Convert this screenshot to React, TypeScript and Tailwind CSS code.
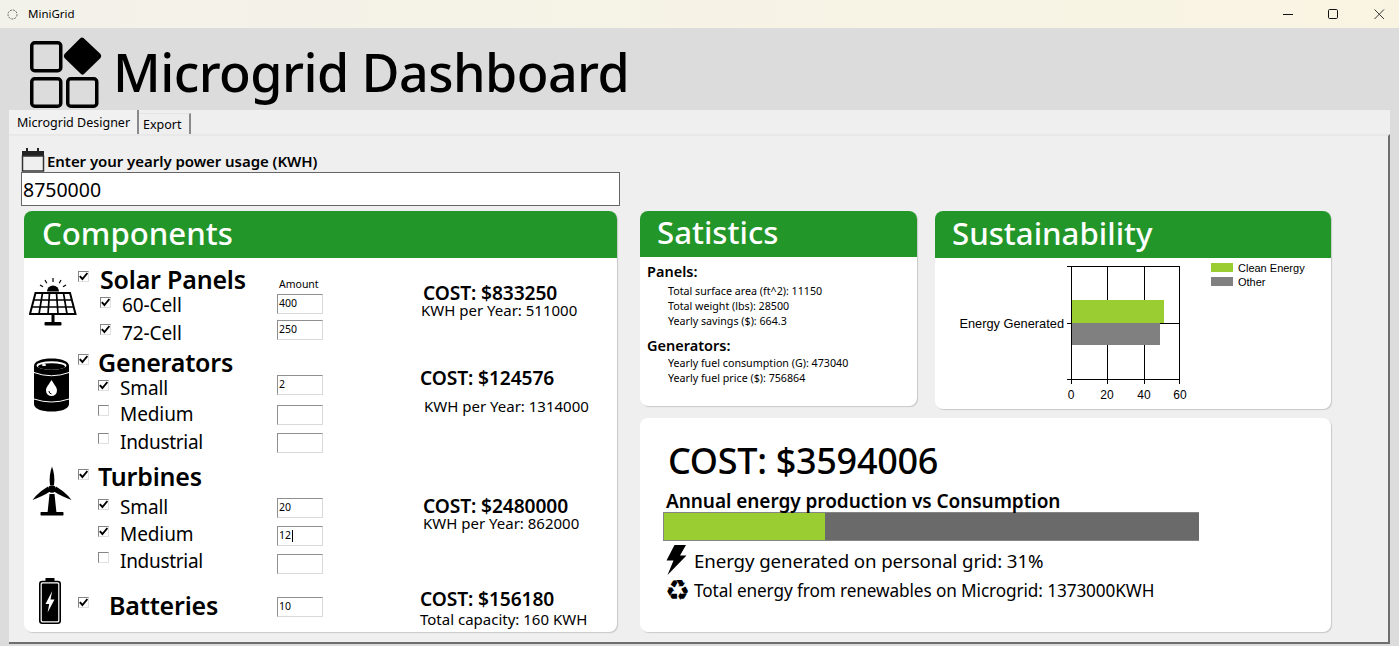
import * as React from 'react';

function Logo() {
  return (
    <svg width="72" height="71" viewBox="0 0 72 71" className="shrink-0">
      <g fill="none" stroke="#000" strokeWidth="3.5">
        <rect x="1.75" y="5.75" width="29" height="28" rx="3" />
        <rect x="1.75" y="41.75" width="29" height="27.5" rx="3" />
        <rect x="37.75" y="41.75" width="29" height="27.5" rx="3" />
      </g>
      <path d="M52 0.5 Q53 0.5 54 1.5 L70.5 17 Q72 19 70.5 21 L54 37 Q52.5 38.5 51 37 L34.5 21 Q33 19 34.5 17 L50 1.5 Q51 0.5 52 0.5 Z" fill="#000" />
    </svg>
  );
}

function WindowControls() {
  return (
    <div className="flex items-center text-black">
      <svg width="12" height="12" viewBox="0 0 12 12" className="mr-[33px]"><path d="M1 6.5H11" stroke="#111" strokeWidth="1" /></svg>
      <svg width="12" height="12" viewBox="0 0 12 12" className="mr-[34px]"><rect x="1.5" y="1.5" width="9" height="9" rx="1.2" fill="none" stroke="#111" strokeWidth="1" /></svg>
      <svg width="12" height="12" viewBox="0 0 12 12" className="mr-[14px]"><path d="M1.5 1.5L11 11M11 1.5L1.5 11" stroke="#222" strokeWidth="0.9" /></svg>
    </div>
  );
}

function CalendarIcon() {
  return (
    <svg width="25" height="25" viewBox="0 0 25 25" className="shrink-0">
      <rect x="1" y="4" width="22" height="7" fill="#222" />
      <rect x="5" y="1" width="2" height="5" fill="#222" />
      <rect x="16" y="1" width="2" height="5" fill="#222" />
      <rect x="1.5" y="9" width="21" height="15" fill="#efefef" stroke="#333" strokeWidth="1.5" />
    </svg>
  );
}

function SolarIcon() {
  return (
    <svg width="48" height="50" viewBox="0 0 48 50">
      <path d="M18 14.5a6 6 0 0 1 12 0z" fill="#000" />
      <g stroke="#000" strokeWidth="1.2">
        <path d="M24 1v4M16 3l1.8 3.2M32 3l-1.8 3.2M11 8l3 1.8M37 8l-3 1.8" />
      </g>
      <path d="M6.5 16H41L46.5 37H1Z" fill="none" stroke="#000" strokeWidth="2" />
      <g stroke="#000" strokeWidth="1.7" fill="none">
        <path d="M4.7 23H43M3 30H45M13.5 16L10 37M20.5 16L19 37M27.5 16L29 37M34.5 16L38 37" />
      </g>
      <rect x="22.5" y="37" width="3" height="9" fill="#000" />
      <rect x="15.5" y="45" width="17" height="3.5" rx="1" fill="#000" />
    </svg>
  );
}

function BarrelIcon() {
  return (
    <svg width="37" height="54" viewBox="0 0 37 54">
      <path d="M1 8C1 3 9 0.5 18.5 0.5S36 3 36 8V46C36 51 28 53.5 18.5 53.5S1 51 1 46Z" fill="#000" />
      <ellipse cx="18.5" cy="7.5" rx="15" ry="4.2" fill="#fff" />
      <ellipse cx="18.5" cy="8.5" rx="13.5" ry="3.2" fill="#000" />
      <ellipse cx="11" cy="7" rx="2.2" ry="1" fill="#fff" />
      <path d="M1 14.5Q18.5 21 36 14.5" fill="none" stroke="#fff" strokeWidth="1" />
      <path d="M1 41Q18.5 47 36 41" fill="none" stroke="#fff" strokeWidth="1" />
      <path d="M18.5 22C21 26.5 24 29 24 32.5a5.5 5.5 0 0 1-11 0C13 29 16 26.5 18.5 22Z" fill="#fff" />
      <path d="M16 33a3 3 0 0 0 2.5 3" fill="none" stroke="#000" strokeWidth="1" />
    </svg>
  );
}

function TurbineIcon() {
  return (
    <svg width="40" height="50" viewBox="0 0 40 50">
      <path d="M20 0.5C22 6 23 13 22 19H18C17 13 18 6 20 0.5Z" fill="#000" />
      <path d="M16 20.5C10 24 4 29 0.5 34C6 32 13 29 18 25.5Z" fill="#000" />
      <path d="M24 20.5C30 24 36 29 39.5 34C34 32 27 29 22 25.5Z" fill="#000" />
      <circle cx="20" cy="23" r="3.8" fill="#000" />
      <path d="M17.5 28H22.5L24.5 47H15.5Z" fill="#000" />
      <rect x="8.5" y="46" width="23" height="3.5" rx="0.7" fill="#000" />
    </svg>
  );
}

function BatteryIcon() {
  return (
    <svg width="22" height="46" viewBox="0 0 22 46">
      <rect x="6.5" y="0" width="9" height="4" fill="#000" />
      <rect x="0.8" y="3.5" width="20.4" height="41.7" rx="2.5" fill="#fff" stroke="#000" strokeWidth="1.6" />
      <rect x="2.8" y="5.5" width="16.4" height="37.7" rx="1" fill="#000" />
      <path d="M13.2 13L6.5 26H10.2L8.6 34.5L15.5 21.5H11.5Z" fill="#fff" />
    </svg>
  );
}

function BoltIcon() {
  return (
    <svg width="21" height="30" viewBox="0 0 21 30">
      <path d="M8.5 0H20L14 10.5H20.5L1.5 30L7.5 15.5H0.5Z" fill="#000" />
    </svg>
  );
}

function Check({ on, className }: { on: boolean; className: string }) {
  return (
    <span className={`flex h-[11px] w-[11px] shrink-0 items-center justify-center border-[1.5px] border-[#858585] border-r-[#e0e0e0] border-b-[#e0e0e0] bg-white ${className}`}>
      {on && (
        <svg width="9" height="9" viewBox="0 0 9 9"><path d="M0.8 4.2L3.4 7L8.4 1" fill="none" stroke="#000" strokeWidth="1.9" /></svg>
      )}
    </span>
  );
}

function Amount({ value, top, caret }: { value: string; top: string; caret?: boolean }) {
  return (
    <div className={`flex h-[20px] w-[46px] items-center border border-[#dadada] border-t-[#8f8f8f] border-l-[#8f8f8f] bg-white pl-px text-[10.5px] ${top}`}>
      {value}
      {caret && <span className="ml-px h-[12px] w-px bg-black" />}
    </div>
  );
}

type RowProps = {
  h: string;
  check: string;
  label: string;
  labelTop: string;
  labelClass: string;
  on: boolean;
  value?: string;
  inputTop?: string;
  caret?: boolean;
  extra?: React.ReactNode;
};

function Row({ h, check, label, labelTop, labelClass, on, value, inputTop, caret, extra }: RowProps) {
  return (
    <div className={`grid grid-cols-[199px_46px] ${h}`}>
      <div className="flex items-start">
        <Check on={on} className={check} />
        <span className={`whitespace-nowrap ${labelTop} ${labelClass}`}>{label}</span>
      </div>
      {inputTop ? <Amount value={value ?? ''} top={inputTop} caret={caret} /> : extra}
    </div>
  );
}

const titleText = 'text-[25px] leading-[26px] font-semibold text-black tracking-[-0.2px]';
const subText = 'text-[19px] leading-[24px] text-black tracking-[-0.1px]';
const costText = 'block whitespace-nowrap text-[19.2px] leading-[18px] font-semibold tracking-[-0.1px]';
const noteText = 'block whitespace-nowrap text-[15px] leading-[16px]';
const cardHead = 'flex items-center rounded-t-lg bg-[#239629] pb-[3px] text-[31.2px] font-medium text-white';

function ComponentsCard() {
  return (
    <div className="h-[421px] w-[593px] shrink-0 rounded-lg bg-white shadow-[1px_1px_1px_#c8c8c8]">
      <div className={`${cardHead} h-[47px] pl-[18px]`}>Components</div>

      <div className="flex h-[88px]">
        <div className="w-[54px] shrink-0 pl-[5px] pt-[19px]"><SolarIcon /></div>
        <div className="w-[345px] shrink-0">
          <Row h="h-[36px]" check="mt-[13px]" label="Solar Panels" labelTop="mt-[8px] ml-[11px]" labelClass={titleText} on extra={<span className="mt-[19px] pl-[2px] text-[10.5px] leading-[14px]">Amount</span>} />
          <Row h="h-[26px]" check="mt-[3px] ml-[22px]" label="60-Cell" labelTop="-mt-[1px] ml-[11px]" labelClass={subText} on value="400" inputTop="mt-0" />
          <Row h="h-[26px]" check="mt-[4px] ml-[22px]" label="72-Cell" labelTop="mt-[1px] ml-[11px]" labelClass={subText} on value="250" inputTop="mt-0" />
        </div>
        <div className="pt-[26px]">
          <span className={costText}>COST: $833250</span>
          <span className={`${noteText} -ml-[2px]`}>KWH per Year: 511000</span>
        </div>
      </div>

      <div className="flex h-[114px]">
        <div className="w-[54px] shrink-0 pl-[9px] pt-[12px]"><BarrelIcon /></div>
        <div className="w-[342px] shrink-0">
          <Row h="h-[29px]" check="mt-[8px]" label="Generators" labelTop="mt-[3px] ml-[9px]" labelClass={titleText} on />
          <Row h="h-[26px]" check="mt-[5px] ml-[20px]" label="Small" labelTop="mt-[1px] ml-[11px]" labelClass={subText} on value="2" inputTop="mt-0" />
          <Row h="h-[28px]" check="mt-[4px] ml-[20px]" label="Medium" labelTop="mt-px ml-[11px]" labelClass={subText} on={false} value="" inputTop="mt-[4px]" />
          <Row h="h-[31px]" check="mt-[4px] ml-[20px]" label="Industrial" labelTop="mt-px ml-[11px]" labelClass={`${subText} tracking-[-0.3px]`} on={false} value="" inputTop="mt-[4px]" />
        </div>
        <div className="pt-[23px]">
          <span className={costText}>COST: $124576</span>
          <span className={`${noteText} ml-[4px] mt-[11px]`}>KWH per Year: 1314000</span>
        </div>
      </div>

      <div className="flex h-[120px]">
        <div className="w-[54px] shrink-0 pl-[8px] pt-[6px]"><TurbineIcon /></div>
        <div className="w-[345px] shrink-0">
          <Row h="h-[34px]" check="mt-[9px]" label="Turbines" labelTop="mt-[3px] ml-[9px]" labelClass={titleText} on />
          <Row h="h-[28px]" check="mt-[5px] ml-[20px]" label="Small" labelTop="mt-px ml-[11px]" labelClass={subText} on value="20" inputTop="mt-[4px]" />
          <Row h="h-[28px]" check="mt-[4px] ml-[20px]" label="Medium" labelTop="ml-[11px]" labelClass={subText} on value="12" inputTop="mt-[4px]" caret />
          <Row h="h-[30px]" check="mt-[2px] ml-[20px]" label="Industrial" labelTop="-mt-px ml-[11px]" labelClass={`${subText} tracking-[-0.3px]`} on={false} value="" inputTop="mt-[4px]" />
        </div>
        <div className="pt-[37px]">
          <span className={costText}>COST: $2480000</span>
          <span className={noteText}>KWH per Year: 862000</span>
        </div>
      </div>

      <div className="flex h-[52px]">
        <div className="w-[54px] shrink-0 pl-[15px] -mt-[2px]"><BatteryIcon /></div>
        <div className="w-[342px] shrink-0">
          <Row h="h-[52px]" check="mt-[17px]" label="Batteries" labelTop="mt-[12px] ml-[20px]" labelClass={titleText} on value="10" inputTop="mt-[17px]" />
        </div>
        <div className="pt-[10px]">
          <span className={costText}>COST: $156180</span>
          <span className={`${noteText} mt-[3px]`}>Total capacity: 160 KWH</span>
        </div>
      </div>
    </div>
  );
}

function StatisticsCard() {
  const stat = 'text-[10.7px] leading-[15px] pl-[21px]';
  const head = 'text-[14.5px] leading-[20px] font-semibold';
  return (
    <div className="h-[195px] w-[277px] shrink-0 rounded-lg bg-white shadow-[1px_1px_1px_#c8c8c8]">
      <div className={`${cardHead} h-[46px] pl-[17px]`}>Satistics</div>
      <div className="pl-[7px] pt-[4px]">
        <div className={head}>Panels:</div>
        <div className={`${stat} mt-[3px]`}>Total surface area (ft^2): 11150</div>
        <div className={stat}>Total weight (lbs): 28500</div>
        <div className={stat}>Yearly savings ($): 664.3</div>
        <div className={`${head} mt-[6px]`}>Generators:</div>
        <div className={`${stat} mt-px`}>Yearly fuel consumption (G): 473040</div>
        <div className={stat}>Yearly fuel price ($): 756864</div>
      </div>
    </div>
  );
}

function EnergyChart() {
  return (
    <svg width="396" height="151" viewBox="0 0 396 151" className="font-['Liberation_Sans',sans-serif]">
      <g stroke="#000" strokeWidth="1" shapeRendering="crispEdges">
        <rect x="136.5" y="8.5" width="108" height="113" fill="#fff" />
        <path d="M172.5 8V122M209.5 8V122M132 8.5H137M132 65.5H245M132 121.5H137M136.5 122V126M172.5 122V126M209.5 122V126M244.5 122V126" />
      </g>
      <rect x="137" y="42" width="92" height="23" fill="#9acd32" />
      <rect x="137" y="65" width="88" height="22" fill="#808080" />
      <g fill="#000">
        <g fontSize="12.8">
          <text x="129" y="70" textAnchor="end">Energy Generated</text>
        </g>
        <g fontSize="12">
          <text x="136" y="140.5" textAnchor="middle">0</text>
          <text x="172" y="140.5" textAnchor="middle">20</text>
          <text x="209" y="140.5" textAnchor="middle">40</text>
          <text x="245" y="140.5" textAnchor="middle">60</text>
        </g>
        <g fontSize="11">
          <text x="303" y="14">Clean Energy</text>
          <text x="303" y="28">Other</text>
        </g>
      </g>
      <rect x="276" y="5" width="22" height="9" fill="#9acd32" />
      <rect x="276" y="19" width="22" height="9" fill="#808080" />
    </svg>
  );
}

function SustainabilityCard() {
  return (
    <div className="h-[198px] w-[396px] shrink-0 rounded-lg bg-white shadow-[1px_1px_1px_#c8c8c8]">
      <div className={`${cardHead} h-[47px] pl-[17px]`}>Sustainability</div>
      <EnergyChart />
    </div>
  );
}

function SummaryCard() {
  return (
    <div className="mt-[9px] h-[214px] w-[691px] rounded-lg bg-white pl-[23px] pt-[18px] shadow-[1px_1px_1px_#c8c8c8]">
      <div className="pl-[5px] text-[36px] leading-[50px] font-medium tracking-[-0.3px]">COST: $3594006</div>
      <div className="ml-[3px] mt-[4px] whitespace-nowrap text-[19px] leading-[22px] font-semibold tracking-[-0.05px]">Annual energy production vs Consumption</div>
      <div className="flex h-[29px] w-[536px] border-[1.5px] border-r-0 border-[#858585] bg-[#6a6a6a]">
        <div className="h-full w-[161px] bg-[#9acd32]" />
      </div>
      <div className="ml-[3px] mt-[4px] flex h-[30px] items-end">
        <BoltIcon />
        <span className="ml-[7px] text-[18.7px] leading-[28px] tracking-[-0.1px]">Energy generated on personal grid: 31%</span>
      </div>
      <div className="ml-[2px] mt-[3px] flex h-[26px] items-center">
        <span className="w-[29px] shrink-0 font-['DejaVu_Sans',sans-serif] text-[28px] leading-[26px]">♻</span>
        <span className="text-[17.2px] leading-[26px] tracking-[-0.1px]">Total energy from renewables on Microgrid: 1373000KWH</span>
      </div>
    </div>
  );
}

export default function App() {
  return (
    <div className="flex h-screen w-full flex-col overflow-hidden bg-[#dcdcdc] font-['Noto_Sans',sans-serif] text-black">
      <div className="flex h-[28px] shrink-0 items-center justify-between bg-gradient-to-r from-[#f3f2ea] to-[#f9f4e2]">
        <div className="flex items-center pl-[7px]">
          <svg width="11" height="11" viewBox="0 0 11 11"><circle cx="5.5" cy="5.5" r="4.5" fill="none" stroke="#666" strokeWidth="1" strokeDasharray="2 1" /></svg>
          <span className="ml-[10px] text-[11.5px]">MiniGrid</span>
        </div>
        <WindowControls />
      </div>

      <div className="flex h-[82px] shrink-0 pl-[30px] pt-[9px]">
        <Logo />
        <span className="ml-[11px] -mt-[7px] whitespace-nowrap text-[52px] leading-[84px] font-medium tracking-[-0.55px]">Microgrid Dashboard</span>
      </div>

      <div className="ml-[9px] mr-[9px] flex min-h-0 flex-1 flex-col">
        <div className="flex h-[24px] shrink-0 bg-[#efefef]">
          <div className="flex h-[24px] w-[130px] items-center border-r-2 border-[#8a8a8a] bg-[#f1f1f1] pl-[8px] pt-[2px] text-[12.5px]">Microgrid Designer</div>
          <div className="mt-[3px] flex h-[21px] w-[52px] items-center border-r-2 border-t border-[#8a8a8a] border-t-[#e4e4e4] pl-[4px] pt-[2px] text-[12.5px]">Export</div>
        </div>
        <div className="mb-[2px] min-h-0 flex-1 border-b-2 border-r-2 border-t-2 border-[#6e6e6e] border-t-[#e8e8e8] bg-[#efefef] pl-[12px]">
          <div className="flex h-[36px] items-end">
            <CalendarIcon />
            <span className="mb-px ml-px whitespace-nowrap text-[15px] font-semibold leading-[20px] tracking-[-0.05px]">Enter your yearly power usage (KWH)</span>
          </div>
          <div className="flex h-[34px] w-[599px] items-center border border-[#666] bg-white pl-px pt-px text-[19.5px]">8750000</div>
          <div className="ml-[3px] mt-[5px] flex gap-[23px]">
            <ComponentsCard />
            <div className="w-[691px]">
              <div className="flex items-start gap-[18px]">
                <StatisticsCard />
                <SustainabilityCard />
              </div>
              <SummaryCard />
            </div>
          </div>
        </div>
      </div>
    </div>
  );
}
